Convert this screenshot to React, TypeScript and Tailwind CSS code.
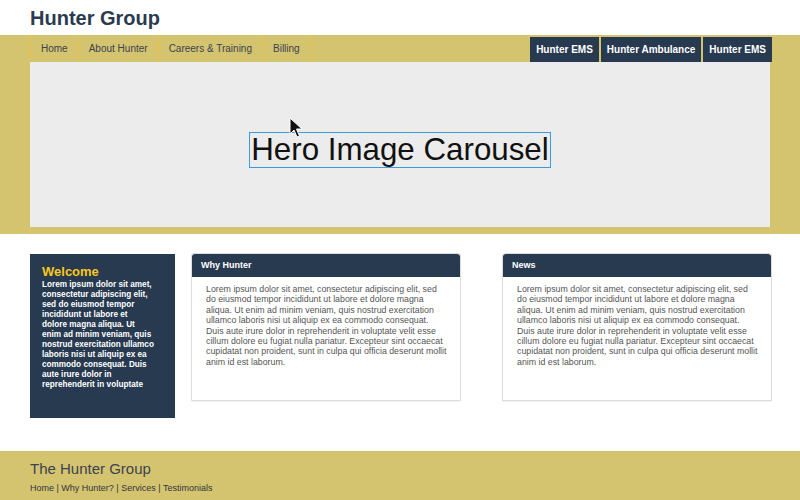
const loremLines = [
  "Lorem ipsum dolor sit amet, consectetur adipiscing elit, sed",
  "do eiusmod tempor incididunt ut labore et dolore magna",
  "aliqua. Ut enim ad minim veniam, quis nostrud exercitation",
  "ullamco laboris nisi ut aliquip ex ea commodo consequat.",
  "Duis aute irure dolor in reprehenderit in voluptate velit esse",
  "cillum dolore eu fugiat nulla pariatur. Excepteur sint occaecat",
  "cupidatat non proident, sunt in culpa qui officia deserunt mollit",
  "anim id est laborum.",
];

const navLinks = ["Home", "About Hunter", "Careers & Training", "Billing"];
const sites = ["Hunter EMS", "Hunter Ambulance", "Hunter EMS"];

const Card = ({ title }: { title: string }) => (
  <div className="w-[270px] h-[148px] shrink-0 bg-white border border-[#dcdcdc] rounded-t-[3px] shadow-[0_1px_2px_rgba(0,0,0,0.06)]">
    <div className="h-[23px] bg-[#283a50] rounded-t-[3px] flex items-center px-[9px] text-white text-[9px] font-bold">
      {title}
    </div>
    <p className="pl-[14px] pt-[7px] text-[8.8px] leading-[10.4px] text-[#555] whitespace-nowrap">
      {loremLines.map((line, i) => (
        <span key={i} className="block">
          {line}
        </span>
      ))}
    </p>
  </div>
);

export default function App() {
  return (
    <div className="w-[800px] h-[500px] bg-white overflow-hidden relative font-['Liberation_Sans',Arial,sans-serif]">
      <header className="h-[35px] px-[30px] flex items-center">
        <h1 className="text-[20px] font-bold text-[#2a3b50] leading-none">
          Hunter Group
        </h1>
      </header>

      <section className="bg-[#d5c46f] px-[30px] pb-[7px]">
        <nav className="h-[27px] flex justify-between">
          <ul className="flex h-[26px]">
            {navLinks.map((l, i) => (
              <li
                key={l}
                className={
                  "flex items-center px-[10px] text-[10px] text-[#3a4250] border-r border-[#e6c44e] " +
                  (i === 0 ? "border-l" : "")
                }
              >
                {l}
              </li>
            ))}
          </ul>
          <div className="flex gap-[2px] pt-[2px] -mr-[2px]">
            {sites.map((s, i) => (
              <a
                key={i}
                className="h-[25px] flex items-center px-[6px] bg-[#283a50] text-white text-[10px] font-bold"
              >
                {s}
              </a>
            ))}
          </div>
        </nav>
        <div className="h-[165px] bg-[#ececec] flex justify-center pt-[70px]">
          <div className="h-[36px] border border-[#3a9be0] px-[1px] flex items-center text-[31.3px] text-[#111] leading-none">
            Hero Image Carousel
          </div>
        </div>
      </section>

      <section className="h-[217px] px-[30px] pt-[19px] flex items-start">
        <div className="w-[145px] h-[164px] shrink-0 mt-[1px] bg-[#283a50] pl-[12px] pt-[10px]">
          <h2 className="text-[13px] font-bold text-[#f7c81e] leading-[16px]">
            Welcome
          </h2>
          <p className="w-[114px] text-[8.2px] font-bold text-white leading-[10px]">
            Lorem ipsum dolor sit amet, consectetur adipiscing elit, sed do
            eiusmod tempor incididunt ut labore et
            <br />
            dolore magna aliqua. Ut enim ad minim veniam, quis nostrud
            exercitation ullamco laboris nisi ut aliquip ex ea commodo
            consequat. Duis aute irure dolor in reprehenderit in voluptate
          </p>
        </div>
        <div className="ml-[16px] shrink-0">
          <Card title="Why Hunter" />
        </div>
        <div className="ml-[41px] shrink-0">
          <Card title="News" />
        </div>
      </section>

      <footer className="h-[49px] bg-[#d5c46f] px-[30px] pt-[9px]">
        <div className="text-[15px] text-[#3b4350] leading-[18px]">
          The Hunter Group
        </div>
        <div className="mt-[4px] text-[9px] text-[#2f3540] leading-[12px]">
          Home | Why Hunter? | Services | Testimonials
        </div>
      </footer>

      <svg
        className="absolute left-[289px] top-[117px]"
        width="14"
        height="22"
        viewBox="0 0 14 22"
      >
        <path
          d="M1 1 L1 17 L5 13 L8 20 L10.5 19 L7.5 12 L13 12 Z"
          fill="#111"
          stroke="#fff"
          strokeWidth="1"
        />
      </svg>
    </div>
  );
}
